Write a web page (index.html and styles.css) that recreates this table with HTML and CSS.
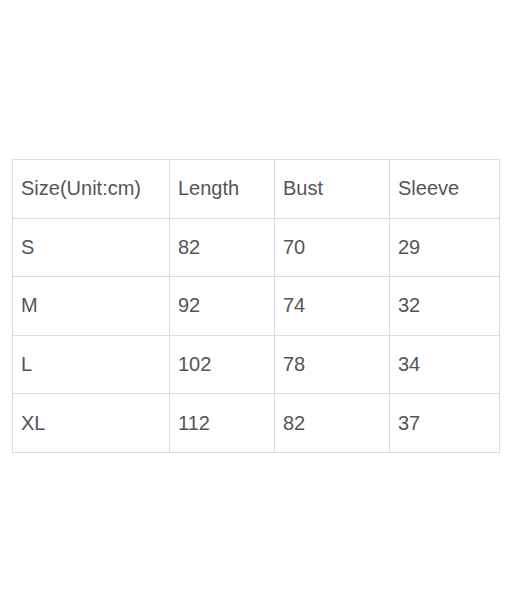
FILE: index.html
```html
<!DOCTYPE html>
<html>
<head>
<meta charset="utf-8">
<link rel="stylesheet" href="styles.css">
</head>
<body>
<table class="size-table">
  <colgroup>
    <col class="c1"><col class="c2"><col class="c3"><col class="c4">
  </colgroup>
  <tr><td>Size(Unit:cm)</td><td>Length</td><td>Bust</td><td>Sleeve</td></tr>
  <tr><td>S</td><td>82</td><td>70</td><td>29</td></tr>
  <tr><td>M</td><td>92</td><td>74</td><td>32</td></tr>
  <tr><td>L</td><td>102</td><td>78</td><td>34</td></tr>
  <tr><td>XL</td><td>112</td><td>82</td><td>37</td></tr>
</table>
</body>
</html>
```
FILE: styles.css
```css
html, body {
  margin: 0;
  padding: 0;
  background: #ffffff;
}
body {
  padding-top: 159px;
  padding-left: 12px;
}
.size-table {
  border-collapse: collapse;
  table-layout: fixed;
  width: 488px;
  font-family: "Liberation Sans", Arial, sans-serif;
  font-size: 20px;
  color: #555555;
}
.c1 { width: 157px; }
.c2 { width: 105px; }
.c3 { width: 115px; }
.c4 { width: 110px; }
.size-table td {
  border: 1px solid #dcdcdc;
  height: 57.6px;
  padding: 0 0 0 8px;
  vertical-align: middle;
  white-space: nowrap;
}
```
